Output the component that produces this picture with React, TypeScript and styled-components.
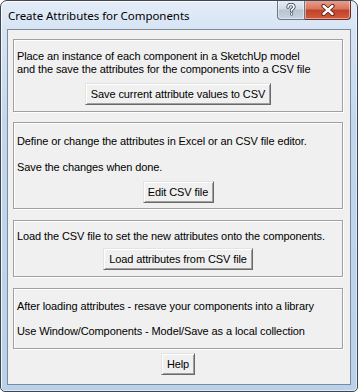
import React from 'react';
import styled, { createGlobalStyle } from 'styled-components';

const GlobalStyle = createGlobalStyle`
  html, body {
    margin: 0;
    padding: 0;
    background: #ffffff;
  }
`;

const Window = styled.div`
  width: 358px;
  height: 392px;
  box-sizing: border-box;
  border: 1px solid #3f4650;
  border-radius: 7px 7px 5px 5px;
  background: linear-gradient(180deg, #e4edf8 0px, #d6e4f4 28px, #c2d7ee 120px, #b9d1ea 100%);
  box-shadow: inset 1px 1px 0 rgba(255, 255, 255, 0.8), inset -1px -1px 0 rgba(255, 255, 255, 0.5);
  display: flex;
  flex-direction: column;
  overflow: hidden;
`;

const TitleBar = styled.div`
  height: 28px;
  display: flex;
  align-items: flex-start;
  justify-content: space-between;
  padding-left: 7px;
  padding-right: 6px;
`;

const Title = styled.div`
  font-family: "Noto Sans", "Open Sans", sans-serif;
  font-size: 11.5px;
  letter-spacing: -0.05px;
  line-height: 16px;
  color: #000000;
  margin-top: 7px;
`;

const CaptionButtons = styled.div`
  display: flex;
  margin-top: -1px;
`;

const CaptionButton = styled.div<{ $variant: 'help' | 'close' }>`
  width: ${p => (p.$variant === 'close' ? 46 : 28)}px;
  height: 20px;
  box-sizing: border-box;
  border: 1px solid ${p => (p.$variant === 'close' ? '#6d2b22' : '#6a7686')};
  border-top: none;
  border-radius: ${p => (p.$variant === 'close' ? '0 0 4px 0' : '0 0 0 4px')};
  ${p => (p.$variant === 'close' ? 'border-left: none;' : '')}
  background: ${p =>
    p.$variant === 'close'
      ? 'linear-gradient(180deg, #e8a493 0%, #d9765f 45%, #c2432a 55%, #cf5d40 100%)'
      : 'linear-gradient(180deg, #e9eef4 0%, #d2dbe6 45%, #b8c4d3 55%, #c8d3e0 100%)'};
  box-shadow: inset 0 0 0 1px rgba(255, 255, 255, 0.45);
  display: flex;
  align-items: center;
  justify-content: center;
`;

const Client = styled.div`
  flex: 1;
  margin: 0 6px 6px 6px;
  border: 1px solid #7c8a9c;
  background: #f0f0f0;
  padding: 9px 7px 0 5px;
  display: flex;
  flex-direction: column;
  font-family: "Liberation Sans", Arial, sans-serif;
  font-size: 11px;
  letter-spacing: -0.1px;
  color: #000000;
`;

const Group = styled.div<{ $h: number; $mt: number }>`
  height: ${p => p.$h}px;
  margin-top: ${p => p.$mt}px;
  box-sizing: border-box;
  border: 1px solid #a0a0a0;
  box-shadow: inset 1px 1px 0 #ffffff, 1px 1px 0 #ffffff;
  padding: 0 3px;
  display: flex;
  flex-direction: column;
  align-items: flex-start;
`;

const Line = styled.div<{ $mt?: number }>`
  line-height: 13px;
  margin-top: ${p => p.$mt ?? 0}px;
  white-space: nowrap;
`;

const Button = styled.button<{ $w: number; $mt: number }>`
  width: ${p => p.$w}px;
  height: 22px;
  margin-top: ${p => p.$mt}px;
  align-self: center;
  box-sizing: border-box;
  padding: 0;
  font-family: "Liberation Sans", Arial, sans-serif;
  font-size: 11px;
  letter-spacing: -0.1px;
  color: #000000;
  background: #f0f0f0;
  border: 1px solid;
  border-color: #e3e3e3 #6a6a6a #6a6a6a #e3e3e3;
  box-shadow: inset 1px 1px 0 #ffffff, inset -1px -1px 0 #a0a0a0;
  border-radius: 0;
`;

const HelpRow = styled.div`
  display: flex;
  justify-content: center;
  width: 330px;
  margin-top: 4px;
`;

const HelpGlyph = () => (
  <svg width="10" height="13" viewBox="0 0 10 13">
    <path
      d="M2 4.2 C2 2.2 3.4 1.5 5 1.5 C6.8 1.5 8 2.5 8 3.9 C8 5.4 6.2 5.8 5.6 6.9 L5.6 8"
      fill="none"
      stroke="#3a4656"
      strokeWidth="3.2"
      strokeLinecap="round"
    />
    <path
      d="M2 4.2 C2 2.2 3.4 1.5 5 1.5 C6.8 1.5 8 2.5 8 3.9 C8 5.4 6.2 5.8 5.6 6.9 L5.6 8"
      fill="none"
      stroke="#ffffff"
      strokeWidth="1.6"
      strokeLinecap="round"
    />
    <circle cx="5.6" cy="11" r="1.6" fill="#3a4656" />
    <circle cx="5.6" cy="11" r="0.9" fill="#ffffff" />
  </svg>
);

const CloseGlyph = () => (
  <svg width="14" height="12" viewBox="0 0 14 12">
    <path d="M2.5 2 L11.5 10 M11.5 2 L2.5 10" stroke="#5a1a12" strokeWidth="4.2" strokeLinecap="round" />
    <path d="M2.5 2 L11.5 10 M11.5 2 L2.5 10" stroke="#ffffff" strokeWidth="2.4" strokeLinecap="round" />
  </svg>
);

export default function App() {
  return (
    <>
      <GlobalStyle />
      <Window>
        <TitleBar>
          <Title>Create Attributes for Components</Title>
          <CaptionButtons>
            <CaptionButton $variant="help">
              <HelpGlyph />
            </CaptionButton>
            <CaptionButton $variant="close">
              <CloseGlyph />
            </CaptionButton>
          </CaptionButtons>
        </TitleBar>
        <Client>
          <Group $h={73} $mt={0}>
            <Line $mt={10}>Place an instance of each component in a SketchUp model</Line>
            <Line>and the save the attributes for the components into a CSV file</Line>
            <Button $w={186} $mt={7}>Save current attribute values to CSV</Button>
          </Group>
          <Group $h={87} $mt={10}>
            <Line $mt={12}>Define or change the attributes in Excel or an CSV file editor.</Line>
            <Line $mt={13}>Save the changes when done.</Line>
            <Button $w={71} $mt={7}>Edit CSV file</Button>
          </Group>
          <Group $h={57} $mt={11}>
            <Line $mt={9}>Load the CSV file to set the new attributes onto the components.</Line>
            <Button $w={150} $mt={5}>Load attributes from CSV file</Button>
          </Group>
          <Group $h={61} $mt={11}>
            <Line $mt={11}>After loading attributes - resave your components into a library</Line>
            <Line $mt={12}>Use Window/Components - Model/Save as a local collection</Line>
          </Group>
          <HelpRow>
            <Button $w={34} $mt={0}>Help</Button>
          </HelpRow>
        </Client>
      </Window>
    </>
  );
}
